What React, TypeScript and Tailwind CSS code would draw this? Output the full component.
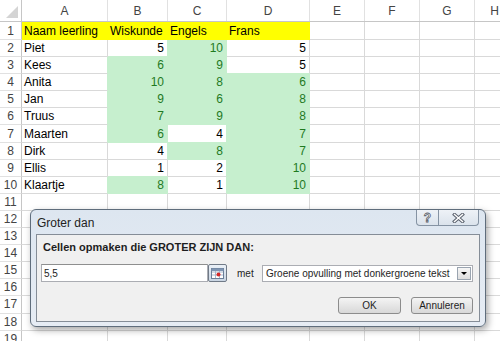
import React from "react";

const cols = [
  { key: "", w: "w-[22px]" },
  { key: "A", w: "w-[86px]" },
  { key: "B", w: "w-[60px]" },
  { key: "C", w: "w-[59px]" },
  { key: "D", w: "w-[83px]" },
  { key: "E", w: "w-[55px]" },
  { key: "F", w: "w-[55px]" },
  { key: "G", w: "w-[55px]" },
  { key: "H", w: "w-[40px]" },
];

const data: [string, number, number, number][] = [
  ["Piet", 5, 10, 5],
  ["Kees", 6, 9, 5],
  ["Anita", 10, 8, 6],
  ["Jan", 9, 6, 8],
  ["Truus", 7, 9, 8],
  ["Maarten", 6, 4, 7],
  ["Dirk", 4, 8, 7],
  ["Ellis", 1, 2, 10],
  ["Klaartje", 8, 1, 10],
];

type Fill = "none" | "green" | "yellow";

type CellData = { text: string; fill: Fill; right?: boolean };

function buildRows(): CellData[][] {
  const rows: CellData[][] = [];
  rows.push([
    { text: "Naam leerling", fill: "yellow" },
    { text: "Wiskunde", fill: "yellow" },
    { text: "Engels", fill: "yellow" },
    { text: "Frans", fill: "yellow" },
  ]);
  data.forEach(([name, a, b, c]) => {
    rows.push([
      { text: name, fill: "none" },
      ...[a, b, c].map((n) => ({
        text: String(n),
        fill: (n > 5.5 ? "green" : "none") as Fill,
        right: true,
      })),
    ]);
  });
  while (rows.length < 19) rows.push([]);
  return rows.map((r) => {
    const full = [...r];
    while (full.length < 8) full.push({ text: "", fill: "none" });
    return full;
  });
}

const bg: Record<Fill, string> = {
  none: "bg-white",
  green: "bg-[#c6efce] text-[#1f7a1f]",
  yellow: "bg-[#ffff00]",
};
const rightBorder: Record<Fill, string> = {
  none: "border-r-[#d9d9d9]",
  green: "border-r-[#c6efce]",
  yellow: "border-r-[#ffff00]",
};
const bottomBorder: Record<Fill, string> = {
  none: "border-b-[#d9d9d9]",
  green: "border-b-[#c6efce]",
  yellow: "border-b-[#ffff00]",
};

function Sheet() {
  const rows = buildRows();
  return (
    <div className="flex flex-col font-['Liberation_Sans',Arial,sans-serif] text-[12px] text-black">
      <div className="flex h-[22px] border-b border-[#c6c6c6] bg-white">
        {cols.map((c, i) => (
          <div
            key={i}
            className={`${c.w} shrink-0 flex items-center justify-center text-[#444] border-r ${
              i === 0 ? "border-[#c6c6c6] relative" : "border-[#e1e1e1]"
            }`}
          >
            {i === 0 ? (
              <div className="absolute right-[3px] bottom-[3px] w-0 h-0 border-l-[12px] border-l-transparent border-b-[12px] border-b-[#d4d4d4]" />
            ) : (
              c.key
            )}
          </div>
        ))}
      </div>
      {rows.map((row, ri) => {
        const below = rows[ri + 1];
        return (
          <div key={ri} className={`flex ${ri === 0 ? "h-[18px]" : "h-[17.1px]"}`}>
            <div className="w-[22px] shrink-0 flex items-center justify-center text-[#444] border-r border-r-[#c6c6c6] border-b border-b-[#e1e1e1] bg-white">
              {ri + 1}
            </div>
            {row.map((cell, ci) => {
              const next = row[ci + 1];
              const rFill: Fill = cell.fill !== "none" ? cell.fill : next ? next.fill : "none";
              const down = below ? below[ci] : undefined;
              const bFill: Fill = cell.fill !== "none" ? cell.fill : down ? down.fill : "none";
              return (
                <div
                  key={ci}
                  className={`${cols[ci + 1].w} shrink-0 flex items-center overflow-hidden whitespace-nowrap border-r border-b ${bg[cell.fill]} ${rightBorder[rFill]} ${bottomBorder[bFill]} ${
                    cell.right ? "justify-end pr-[3px]" : "pl-[2px]"
                  }`}
                >
                  {cell.text}
                </div>
              );
            })}
          </div>
        );
      })}
    </div>
  );
}

function RefIcon() {
  return (
    <svg width="13" height="11" viewBox="0 0 13 11">
      <rect x="0.5" y="0.5" width="12" height="10" fill="#fff" stroke="#6b7f99" />
      <path d="M1 4h11M1 7h11M4.5 1v9M8.5 1v9" stroke="#a9b8cc" strokeWidth="1" />
      <rect x="0.5" y="0.5" width="12" height="2.5" fill="#7f95b3" />
      <circle cx="7.5" cy="6.5" r="2" fill="#d42a2a" />
    </svg>
  );
}

function Dialog() {
  return (
    <div className="absolute left-[30px] top-[209px] w-[456px] h-[118px] rounded-[6px] border border-[#5f6d7c] bg-gradient-to-b from-[#dde6f0] to-[#e6ecf4] shadow-[2px_3px_7px_rgba(0,0,0,0.35)] flex flex-col font-['Liberation_Sans',Arial,sans-serif]">
      <div className="h-[24px] flex items-start">
        <div className="pl-[6px] pt-[6px] text-[12px] text-[#222] leading-[14px]">Groter dan</div>
        <div className="ml-auto mr-[6px] flex h-[16px]">
          <div className="w-[23px] h-[16px] border border-t-0 border-[#8593a3] rounded-bl-[4px] bg-gradient-to-b from-[#eef2f7] to-[#dbe3ec] flex items-center justify-center">
            <span className="text-[12px] font-bold leading-none text-white [-webkit-text-stroke:0.8px_#59606a]">?</span>
          </div>
          <div className="w-[40px] h-[16px] border border-t-0 border-l-0 border-[#8593a3] rounded-br-[4px] bg-gradient-to-b from-[#eef2f7] to-[#dbe3ec] flex items-center justify-center">
            <svg width="13" height="10" viewBox="0 0 13 10">
              <path d="M2.5 1.5L10.5 8.5M10.5 1.5L2.5 8.5" stroke="#5d6470" strokeWidth="3.4" strokeLinecap="square" />
              <path d="M2.5 1.5L10.5 8.5M10.5 1.5L2.5 8.5" stroke="#ffffff" strokeWidth="1.4" strokeLinecap="square" />
            </svg>
          </div>
        </div>
      </div>
      <div className="mx-[5px] h-[88px] border border-[#858d97] bg-[#f0f0f0] flex flex-col text-[10px] text-[#1e1e1e]">
        <div className="pl-[6px] pt-[5px] leading-[14px] text-[11px] font-bold">
          Cellen opmaken die GROTER ZIJN DAN:
        </div>
        <div className="mt-[10px] pl-[4px] flex items-center">
          <div className="w-[167px] h-[18px] border border-[#abadb3] border-t-[#8e8f8f] bg-white pl-[2px] flex items-center">
            5,5
          </div>
          <div className="w-[19px] h-[18px] border border-[#707a87] rounded-[2px] bg-gradient-to-b from-[#eaf0f7] to-[#c9d5e3] flex items-center justify-center">
            <RefIcon />
          </div>
          <div className="ml-[10px] w-[25px]">met</div>
          <div className="w-[211px] h-[17px] border border-[#abadb3] bg-white flex items-center">
            <div className="flex-1 pl-[3px] whitespace-nowrap overflow-hidden">
              Groene opvulling met donkergroene tekst
            </div>
            <div className="w-[14px] h-[13px] mr-[1px] border border-[#9aa4b0] bg-gradient-to-b from-[#f6f6f6] to-[#dedede] flex items-center justify-center">
              <div className="w-0 h-0 border-l-[3px] border-r-[3px] border-t-[3px] border-l-transparent border-r-transparent border-t-black" />
            </div>
          </div>
        </div>
        <div className="mt-[15px] pr-[6px] flex justify-end gap-[10px]">
          <div className="w-[63px] h-[17px] border border-[#8c8c8c] rounded-[3px] bg-gradient-to-b from-[#f4f4f4] to-[#d8d8d8] flex items-center justify-center">
            OK
          </div>
          <div className="w-[62px] h-[17px] border border-[#8c8c8c] rounded-[3px] bg-gradient-to-b from-[#f4f4f4] to-[#d8d8d8] flex items-center justify-center">
            Annuleren
          </div>
        </div>
      </div>
    </div>
  );
}

export default function App() {
  return (
    <div className="relative w-[500px] h-[341px] overflow-hidden bg-white">
      <Sheet />
      <Dialog />
    </div>
  );
}
